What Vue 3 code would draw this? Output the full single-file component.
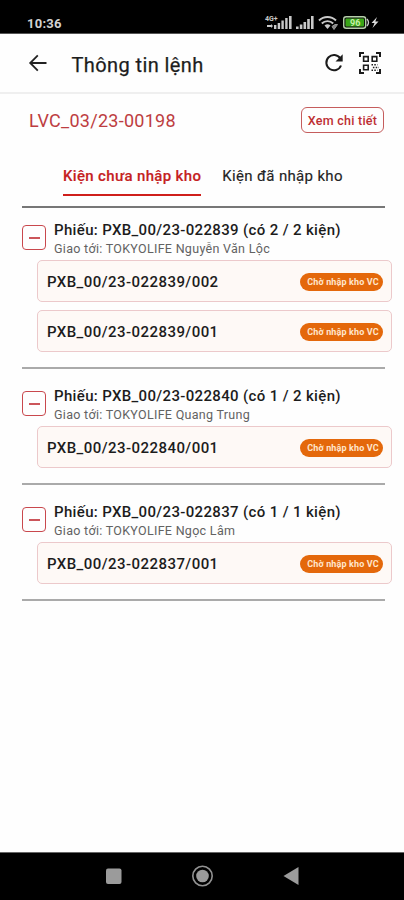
<template>
  <div class="screen">
    <div class="status-bar">
      <span class="clock">10:36</span>
      <svg class="status-icons" width="116" height="20" viewBox="0 0 116 20">
        <g fill="#c9c9c9">
          <text x="1" y="7" class="net-label">4G+</text>
          <path d="M3 11h4v-1l2 2-2 2v-1H3zM10 11h2.400v4H10zM13.700 9h2.400v6h-2.400zM17.400 6.500h2.400v8.500h-2.400zM21.200 4h2.400v11h-2.400zM25 2h2.600v13H25z" />
          <path d="M32 12.500h2.600v2.500H32zM35.800 10.500h2.600v4.500h-2.600zM39.500 8h2.600v7h-2.600zM43.200 5h2.600v10h-2.600zM47 2h2.600v13H47z" />
          <path d="M63.500 15l-3-3.400a4.500 4.500 0 0 1 6 0z" />
        </g>
        <g fill="none" stroke="#c9c9c9" stroke-width="1.900">
          <path d="M55 6.500a12 12 0 0 1 17 0" />
          <path d="M57.800 9.500a8 8 0 0 1 11.400 0" />
        </g>
        <path d="M68 12.500l3-2 2.500 0-3.500 5z" fill="#888" stroke="#999" />
        <rect x="79.700" y="2.800" width="22" height="11.500" rx="2.500" fill="#111" stroke="#b4cfa8" stroke-width="1.400" />
        <rect x="81.500" y="4.500" width="18.500" height="8" rx="1" fill="#39a516" />
        <path d="M103 5q3 3.500 0 7" fill="none" stroke="#ccc" stroke-width="1.300" />
        <text x="86" y="12" class="battery-label">96</text>
        <path d="M113 3l-5.500 6h3l-2 5 6-6.500h-3.200z" fill="#ddd" />
      </svg>
    </div>

    <header class="header">
      <svg class="back" width="20" height="20" viewBox="0 0 20 20" fill="none" stroke="#222" stroke-width="1.800">
        <path d="M18.500 10H2.500M9.800 2.300L2.200 10l7.600 7.700" />
      </svg>
      <h1 class="header-title">Thông tin lệnh</h1>
      <svg class="refresh" width="20" height="20" viewBox="0 0 20 20">
        <path d="M16.300 5.500A7.600 7.600 0 1 0 17 12.500" fill="none" stroke="#1b1b1b" stroke-width="2" />
        <path d="M18.700 1.200v7.300h-7.200z" fill="#1b1b1b" />
      </svg>
      <svg class="qr" width="24" height="24" viewBox="0 0 24 24" fill="none" stroke="#1b1b1b">
        <path stroke-width="2" d="M2 6V2h4M18 2h4v4M2 18v4h4M18 22h4v-4" />
        <path stroke-width="1.600" d="M5.600 5.600h4.600v4.600H5.600zM14.200 5.600h4.600v4.600h-4.600zM5.600 14.200h4.600v4.600H5.600z" />
        <path stroke-width="1.500" stroke-dasharray="1.500 1.300" d="M13.500 13.800h6M13.500 19.200h6" />
        <path stroke-width="1.500" stroke-dasharray="1.500 1.300" d="M14.900 16.500h6" />
      </svg>
    </header>

    <section class="order">
      <span class="order-code">LVC_03/23-00198</span>
      <button class="detail-btn"><span>Xem chi tiết</span></button>
    </section>

    <nav class="tabs">
      <button
        v-for="(tab, idx) in tabs"
        :key="tab"
        class="tab"
        :class="{ active: idx === activeTab }"
        @click="activeTab = idx"
      >{{ tab }}</button>
    </nav>

    <main class="groups">
      <section v-for="group in groups" :key="group.code" class="group">
        <div class="group-head">
          <button class="toggle" @click="group.open = !group.open">
            <span class="bar"></span>
            <span v-if="!group.open" class="bar vertical"></span>
          </button>
          <div class="group-info">
            <div class="group-title">Phiếu: {{ group.code }} (có {{ group.count }} / {{ group.total }} kiện)</div>
            <div class="group-sub">Giao tới: {{ group.store }}</div>
          </div>
        </div>
        <div v-if="group.open" class="packages">
          <div v-for="item in group.items" :key="item" class="package">
            <span class="package-code">{{ group.code }}/{{ item }}</span>
            <span class="badge">Chờ nhập kho VC</span>
          </div>
        </div>
      </section>
    </main>

    <div class="nav-bar">
      <svg width="404" height="47" viewBox="0 0 404 47">
        <rect x="106" y="15.500" width="15.500" height="15.500" rx="2" fill="#9b9b9b" />
        <circle cx="202.500" cy="23" r="9.700" fill="none" stroke="#929292" stroke-width="1.600" />
        <circle cx="202.500" cy="23" r="6.300" fill="#9b9b9b" />
        <path d="M283.500 23l15-9v18z" fill="#9b9b9b" />
      </svg>
    </div>
  </div>
</template>

<script setup>
import { ref } from 'vue'

const tabs = ['Kiện chưa nhập kho', 'Kiện đã nhập kho']
const activeTab = ref(0)

const groups = ref([
  { code: 'PXB_00/23-022839', count: 2, total: 2, store: 'TOKYOLIFE Nguyễn Văn Lộc', items: ['002', '001'], open: true },
  { code: 'PXB_00/23-022840', count: 1, total: 2, store: 'TOKYOLIFE Quang Trung', items: ['001'], open: true },
  { code: 'PXB_00/23-022837', count: 1, total: 1, store: 'TOKYOLIFE Ngọc Lâm', items: ['001'], open: true }
])
</script>

<style>
body {
  margin: 0;
  background: #fefefe;
}
</style>

<style scoped>
.screen {
  display: flex;
  flex-direction: column;
  width: 404px;
  height: 900px;
  overflow: hidden;
  background: #fefefe;
  font-family: Roboto, sans-serif;
  color: #1c1c1c;
}

button {
  padding: 0;
  border: none;
  background: none;
  font-family: inherit;
  cursor: pointer;
}

.status-bar {
  display: flex;
  justify-content: space-between;
  height: 34px;
  padding: 0 24px 0 27px;
  box-sizing: border-box;
  background: #000;
  border-bottom: 1px solid #555;
}

.clock {
  margin-top: 15px;
  font-size: 13px;
  line-height: 17px;
  font-weight: 700;
  letter-spacing: 0.25px;
  color: #d2d2d2;
}

.status-icons {
  margin-top: 14px;
}

.net-label {
  font-size: 7px;
  font-weight: 700;
}

.battery-label {
  font-size: 9px;
  font-weight: 700;
  fill: #c6f0a8;
}

.header {
  display: flex;
  align-items: center;
  height: 60px;
  padding: 0 22px 0 28px;
  box-sizing: border-box;
  border-bottom: 2px solid #efefef;
}

.header-title {
  flex: 1;
  margin: 3px 0 0 23.5px;
  font-size: 20px;
  line-height: 24px;
  font-weight: 400;
  letter-spacing: 0.4px;
  -webkit-text-stroke: 0.25px #222;
}

.refresh {
  margin-right: 14px;
}

.order {
  display: flex;
  align-items: center;
  justify-content: space-between;
  height: 52px;
  padding: 0 20px 0 29px;
}

.order-code {
  font-size: 18px;
  letter-spacing: 0.27px;
  color: #bd3d41;
}

.detail-btn {
  width: 83px;
  height: 26px;
  border: 1.5px solid #c55d5d;
  border-radius: 6px;
  font-size: 12.5px;
  font-weight: 500;
  letter-spacing: 0.25px;
  color: #bd2f33;
  white-space: nowrap;
}

.tabs {
  display: flex;
  gap: 21px;
  height: 34px;
  margin-top: 16px;
  padding-left: 63px;
}

.tab {
  height: 34px;
  padding-bottom: 5px;
  box-sizing: border-box;
  border-bottom: 2px solid transparent;
  font-size: 15px;
  font-weight: 400;
  letter-spacing: 0.34px;
  color: #242424;
  white-space: nowrap;
  -webkit-text-stroke: 0.15px currentColor;
}

.tab.active {
  border-bottom-color: #cf1f1b;
  font-weight: 500;
  color: #c5211f;
}

.groups {
  flex: 1;
  margin: 10px 19px 0 22px;
  border-top: 2px solid #777;
}

.group {
  padding: 22.5px 0 14.5px;
  border-bottom: 2px solid #aaa;
}

.group:first-child {
  padding-top: 17px;
}

.group-head {
  display: flex;
  height: 35px;
}

.toggle {
  display: grid;
  place-items: center;
  flex: none;
  width: 24px;
  height: 25px;
  border: 1.5px solid #c9484d;
  border-radius: 4px;
}

.bar {
  grid-area: 1 / 1;
  width: 11px;
  height: 2px;
  background: #cb555a;
}

.bar.vertical {
  transform: rotate(90deg);
}

.group-info {
  margin: -5px 0 0 8px;
  white-space: nowrap;
}

.group-title {
  font-size: 15px;
  line-height: 20px;
  font-weight: 500;
  letter-spacing: 0.35px;
}

.group-sub {
  font-size: 12.5px;
  line-height: 18px;
  letter-spacing: 0.3px;
  color: #626262;
}

.packages {
  display: flex;
  flex-direction: column;
  gap: 8px;
  margin: 0 -7px 0 15px;
}

.package {
  display: flex;
  align-items: center;
  justify-content: space-between;
  height: 42px;
  padding: 1px 8px 0 9px;
  box-sizing: border-box;
  border: 1px solid #ecc9cb;
  border-radius: 5px;
  background: #fef9f6;
}

.package-code {
  font-size: 15px;
  font-weight: 500;
  letter-spacing: 0.45px;
}

.badge {
  width: 83px;
  height: 18px;
  padding-left: 3px;
  box-sizing: border-box;
  border-radius: 9px;
  background: #e4680b;
  font-size: 9px;
  line-height: 19px;
  font-weight: 700;
  letter-spacing: 0.13px;
  text-align: center;
  color: #ffe6cd;
  white-space: nowrap;
}

.nav-bar {
  height: 47px;
  border-top: 1px solid #666;
  background: #000;
}
</style>
